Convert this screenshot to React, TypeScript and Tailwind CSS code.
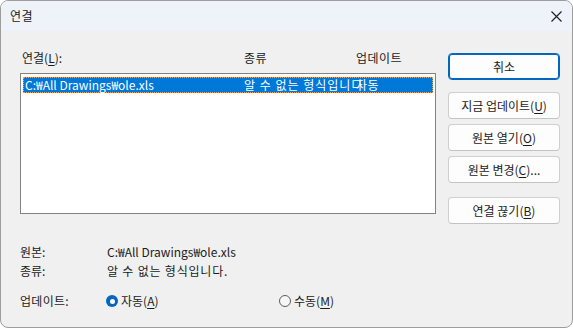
import React from 'react';

const font = { fontFamily: '"Noto Sans CJK KR", "Noto Sans", sans-serif' };

function Key({ k }: { k: string }) {
  return <span className="underline underline-offset-2">{k}</span>;
}

function DlgButton({ children, primary = false }: { children: React.ReactNode; primary?: boolean }) {
  return (
    <button
      className={`h-[27px] w-[112px] rounded-[4px] bg-[#fdfdfd] text-[12px] text-[#1b1b1b] leading-none ${
        primary ? 'border border-[#0067c0] shadow-[inset_0_0_0_1px_#0067c0]' : 'border border-[#d0d0d0] border-b-[#c2c2c2]'
      }`}
    >
      {children}
    </button>
  );
}

function Radio({ checked, children }: { checked: boolean; children: React.ReactNode }) {
  return (
    <div className="flex items-center gap-[3px]">
      {checked ? (
        <span className="flex h-[12px] w-[12px] items-center justify-center rounded-full bg-[#0067c0]">
          <span className="h-[5px] w-[5px] rounded-full bg-white" />
        </span>
      ) : (
        <span className="h-[12px] w-[12px] rounded-full border border-[#5d5d5d] bg-[#f7f7f7]" />
      )}
      <span>{children}</span>
    </div>
  );
}

export default function App() {
  return (
    <div className="h-[328px] w-[573px] bg-white" style={font}>
      <div className="flex h-full w-full flex-col overflow-hidden rounded-[8px] border border-[#9d9d9d] bg-[#f0f0f0] text-[12px] text-[#1b1b1b]">
        {/* title bar */}
        <div className="flex h-[30px] items-center justify-between bg-[#eef3f9] pl-[9px] pr-[10px]">
          <span className="text-[12px] leading-none tracking-[0.5px]">연결</span>
          <svg width="11" height="11" viewBox="0 0 11 11">
            <path d="M0.5 0.5 L10.5 10.5 M10.5 0.5 L0.5 10.5" stroke="#1b1b1b" strokeWidth="1.1" />
          </svg>
        </div>

        <div className="flex pl-[19px]">
          {/* left column */}
          <div className="w-[416px]">
            <div className="relative mt-[19px] h-[16px] leading-[16px]">
              <span className="absolute left-[2px]">
                연결(<Key k="L" />):
              </span>
              <span className="absolute left-[224px] tracking-[0.5px]">종류</span>
              <span className="absolute left-[336px] tracking-[0.5px]">업데이트</span>
            </div>

            <div className="mt-[7px] h-[141px] border border-[#838383] bg-white pt-[3px] pl-[2px] pr-[2px]">
              <div className="relative h-[16px] w-[410px] bg-[#0078d7] leading-[15px] text-white outline-1 outline-dotted outline-offset-[-1px] outline-[#f6a04d]">
                <span className="absolute left-[2px] whitespace-nowrap">C:₩All Drawings₩ole.xls</span>
                <span className="absolute left-[221px] whitespace-nowrap tracking-[1px]">알 수 없는 형식입니다</span>
                <span className="absolute left-[333px] whitespace-nowrap tracking-[0.5px]">자동</span>
              </div>
            </div>

            <div className="mt-[30px] grid grid-cols-[87px_1fr] leading-[16px]">
              <span>원본:</span>
              <span>C:₩All Drawings₩ole.xls</span>
              <span className="mt-[3px]">종류:</span>
              <span className="mt-[3px] tracking-[0.8px]">알 수 없는 형식입니다.</span>
              <span className="mt-[14px] tracking-[0.3px]">업데이트:</span>
              <div className="mt-[14px] -ml-[1px] flex">
                <div className="w-[173px]">
                  <Radio checked>
                    자동(<Key k="A" />)
                  </Radio>
                </div>
                <Radio checked={false}>
                  수동(<Key k="M" />)
                </Radio>
              </div>
            </div>
          </div>

          {/* right column */}
          <div className="ml-[12px] flex flex-col pt-[22px]">
            <DlgButton primary>취소</DlgButton>
            <div className="mt-[12px] flex flex-col gap-[5px]">
              <DlgButton>
                지금 업데이트(<Key k="U" />)
              </DlgButton>
              <DlgButton>
                원본 열기(<Key k="O" />)
              </DlgButton>
              <DlgButton>
                원본 변경(<Key k="C" />)...
              </DlgButton>
            </div>
            <div className="mt-[14px]">
              <DlgButton>
                연결 끊기(<Key k="B" />)
              </DlgButton>
            </div>
          </div>
        </div>
      </div>
    </div>
  );
}
